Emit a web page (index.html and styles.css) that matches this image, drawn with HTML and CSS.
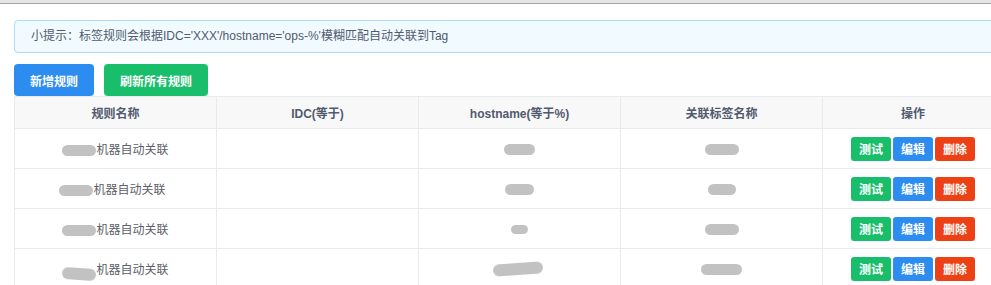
FILE: index.html
```html
<!DOCTYPE html>
<html lang="zh-CN">
<head>
<meta charset="utf-8">
<title>标签规则</title>
<link rel="stylesheet" href="styles.css">
</head>
<body>
<div class="topbar"></div>
<div class="page">
  <div class="alert">小提示：标签规则会根据IDC='XXX'/hostname='ops-%'模糊匹配自动关联到Tag</div>
  <div class="toolbar">
    <button class="btn btn-primary">新增规则</button>
    <button class="btn btn-success">刷新所有规则</button>
  </div>
  <table class="grid">
    <colgroup>
      <col class="c1"><col class="c2"><col class="c3"><col class="c4"><col class="c5">
    </colgroup>
    <thead>
      <tr><th>规则名称</th><th>IDC(等于)</th><th>hostname(等于%)</th><th>关联标签名称</th><th>操作</th></tr>
    </thead>
    <tbody>
      <tr>
        <td><span class="blob b-name"></span>机器自动关联</td>
        <td></td>
        <td><span class="blob b-host1"></span></td>
        <td><span class="blob b-tag1"></span></td>
        <td class="ops"><button class="mini green">测试</button><button class="mini blue">编辑</button><button class="mini red">删除</button></td>
      </tr>
      <tr>
        <td class="shift-l"><span class="blob b-name"></span>机器自动关联</td>
        <td></td>
        <td><span class="blob b-host2"></span></td>
        <td><span class="blob b-tag2"></span></td>
        <td class="ops"><button class="mini green">测试</button><button class="mini blue">编辑</button><button class="mini red">删除</button></td>
      </tr>
      <tr>
        <td><span class="blob b-name"></span>机器自动关联</td>
        <td></td>
        <td><span class="blob b-host3"></span></td>
        <td><span class="blob b-tag3"></span></td>
        <td class="ops"><button class="mini green">测试</button><button class="mini blue">编辑</button><button class="mini red">删除</button></td>
      </tr>
      <tr>
        <td><span class="blob b-name low"></span>机器自动关联</td>
        <td></td>
        <td><span class="blob b-host4"></span></td>
        <td><span class="blob b-tag4"></span></td>
        <td class="ops"><button class="mini green">测试</button><button class="mini blue">编辑</button><button class="mini red">删除</button></td>
      </tr>
    </tbody>
  </table>
</div>
</body>
</html>
```
FILE: styles.css
```css
html, body {
  margin: 0;
  padding: 0;
  overflow: hidden;
  background: #fff;
}
body {
  font-family: "Liberation Sans", "Noto Sans CJK SC", sans-serif;
  font-size: 12px;
  color: #515a6e;
}
.topbar {
  height: 3px;
  background: #e4e4e4;
  border-bottom: 1px solid #a3a3a3;
}
.page {
  width: 989px;
  padding: 16px 0 0 14px;
}
.alert {
  width: 1000px;
  height: 31px;
  line-height: 31px;
  border: 1px solid #abdcff;
  background: #f0faff;
  border-radius: 4px;
  padding-left: 16px;
  color: #515a6e;
  font-size: 12px;
  white-space: nowrap;
}
.toolbar {
  display: flex;
  gap: 10px;
  margin-top: 11px;
}
.btn {
  height: 32px;
  padding: 0 16px;
  border: none;
  border-radius: 4px;
  color: #fff;
  font-family: inherit;
  font-size: 12px;
  font-weight: bold;
  cursor: pointer;
}
.btn-primary { background: #2d8cf0; }
.btn-success { background: #19be6b; }
.grid {
  width: 989px;
  border-collapse: collapse;
  table-layout: fixed;
}
.c1, .c2, .c3, .c4 { width: 202px; }
.c5 { width: 181px; }
.grid th, .grid td {
  border: 1px solid #e8eaec;
  text-align: center;
  padding: 0;
  white-space: nowrap;
}
.grid th {
  height: 31px;
  background: #f8f8f9;
  font-weight: bold;
  color: #515a6e;
}
.grid td {
  height: 39px;
  color: #5c6068;
}
.grid tr:last-child td { border-bottom: none; }
.blob {
  display: inline-block;
  vertical-align: middle;
  height: 11px;
  border-radius: 6px;
  background: #c2c2c2;
  filter: blur(0.6px);
}
.b-name { width: 34px; }
.shift-l { padding-right: 6px !important; }
.low { transform: translateY(3px) rotate(4deg); height: 12px; }
.b-host1 { width: 31px; }
.b-tag1 { width: 34px; }
.b-host2 { width: 29px; }
.b-tag2 { width: 28px; }
.b-host3 { width: 17px; height: 9px; }
.b-tag3 { width: 34px; }
.b-host4 { width: 50px; height: 12px; transform: rotate(-4deg); margin-right: 4px; }
.b-tag4 { width: 41px; }
.ops {
  font-size: 0;
}
.mini {
  width: 40px;
  height: 24px;
  margin: 0 1px;
  padding: 0;
  border: none;
  border-radius: 3px;
  color: #fff;
  font-family: inherit;
  font-size: 12px;
  font-weight: bold;
  vertical-align: middle;
  cursor: pointer;
}
.green { background: #19be6b; }
.blue { background: #2d8cf0; }
.red { background: #ed4014; }
```
